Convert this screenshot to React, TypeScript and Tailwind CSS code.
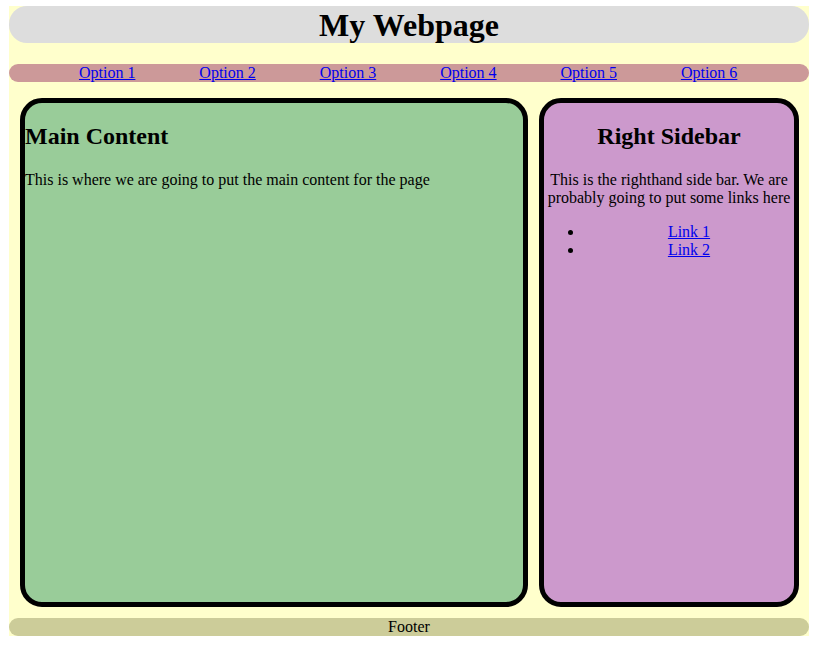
export default function App() {
  const options = ["Option 1", "Option 2", "Option 3", "Option 4", "Option 5", "Option 6"];

  return (
    <div className="min-h-screen bg-white pt-[6px] pl-[9px] font-['Liberation_Serif',serif] text-black">
      <div className="w-[800px] bg-[#ffffcc] flow-root">
        {/* header */}
        <div className="h-[37px] rounded-[18px] bg-[#dddddd] flex items-center justify-center">
          <h1 className="text-[32px] font-bold leading-none">My Webpage</h1>
        </div>

        {/* nav */}
        <ul className="mt-[21px] h-[18px] rounded-[9px] bg-[#cc9999] flex pl-[38px] text-[16px] leading-[18px]">
          {options.map((o) => (
            <li key={o} className="w-[120.4px] text-center">
              <a href="#" className="text-[#0000ee] underline">
                {o}
              </a>
            </li>
          ))}
        </ul>

        {/* content row */}
        <div className="mt-[16px] flex gap-[11px] pl-[11px]">
          <div className="w-[508px] h-[509px] border-[5px] border-black rounded-[22px] bg-[#99cc99] flow-root">
            <h2 className="mt-[19px] mb-[21px] text-[24px] font-bold leading-[28px]">Main Content</h2>
            <p className="text-[16px] leading-[18px]">
              This is where we are going to put the main content for the page
            </p>
          </div>

          <div className="w-[260px] h-[509px] border-[5px] border-black rounded-[22px] bg-[#cc99cc] text-center flow-root">
            <h2 className="mt-[19px] mb-[21px] text-[24px] font-bold leading-[28px]">Right Sidebar</h2>
            <p className="text-[16px] leading-[18px]">
              This is the righthand side bar. We are probably going to put some links here
            </p>
            <ul className="mt-[16px] list-disc pl-10 text-[16px] leading-[18px]">
              <li>
                <a href="#" className="text-[#0000ee] underline">
                  Link 1
                </a>
              </li>
              <li>
                <a href="#" className="text-[#0000ee] underline">
                  Link 2
                </a>
              </li>
            </ul>
          </div>
        </div>

        {/* footer */}
        <div className="mt-[11px] h-[18px] rounded-[9px] bg-[#cccc99] text-center text-[16px] leading-[18px]">
          Footer
        </div>
      </div>
    </div>
  );
}
